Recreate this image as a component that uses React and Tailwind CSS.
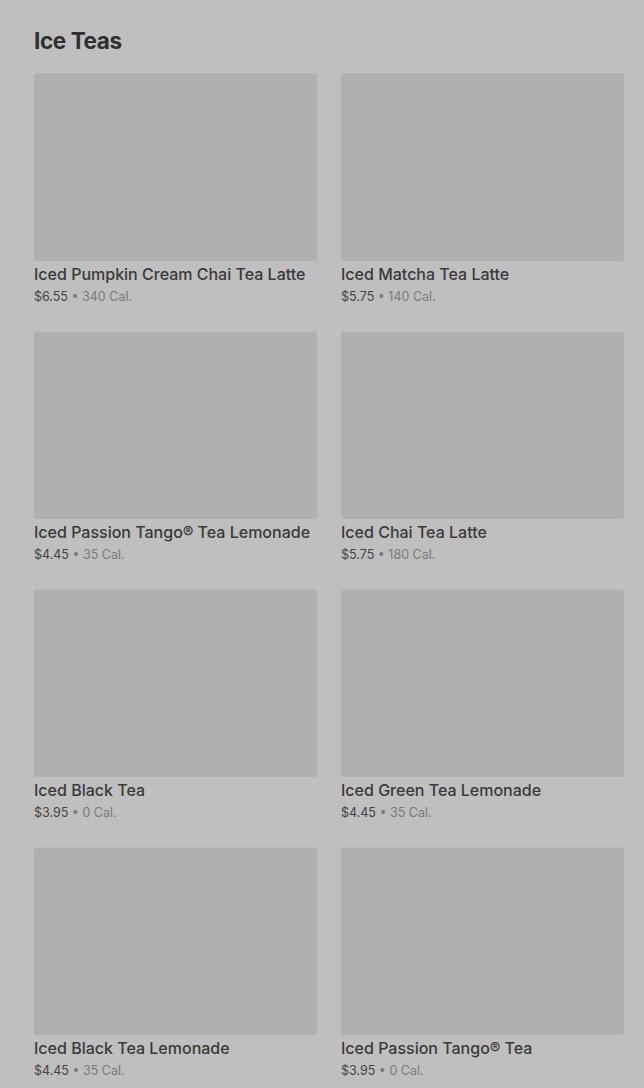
import React from "react";

const items = [
  { name: "Iced Pumpkin Cream Chai Tea Latte", price: "$6.55", cal: "340 Cal." },
  { name: "Iced Matcha Tea Latte", price: "$5.75", cal: "140 Cal." },
  { name: "Iced Passion Tango® Tea Lemonade", price: "$4.45", cal: "35 Cal." },
  { name: "Iced Chai Tea Latte", price: "$5.75", cal: "180 Cal." },
  { name: "Iced Black Tea", price: "$3.95", cal: "0 Cal." },
  { name: "Iced Green Tea Lemonade", price: "$4.45", cal: "35 Cal." },
  { name: "Iced Black Tea Lemonade", price: "$4.45", cal: "35 Cal." },
  { name: "Iced Passion Tango® Tea", price: "$3.95", cal: "0 Cal." },
];

export default function App() {
  return (
    <div
      className="min-h-[1088px] w-full bg-[#bfbfbf] pl-[34px] pr-[20px] pt-[26px]"
      style={{ fontFamily: "Inter, 'Noto Sans', sans-serif" }}
    >
      <h2 className="text-[22.5px] leading-[30px] font-bold text-[#2f2f2f] tracking-[-0.4px]">Ice Teas</h2>
      <div className="mt-[17px] grid grid-cols-2 gap-x-[24px] gap-y-[26px]">
        {items.map((it) => (
          <div key={it.name} className="flex flex-col">
            <div className="h-[188px] w-full rounded-[2px] bg-[#b0b0b0] border-t border-[#b8b8b8]" />
            <div className="mt-[3px] text-[16px] leading-[20px] font-medium text-[#3a3a3a] whitespace-nowrap">
              {it.name}
            </div>
            <div className="mt-[4px] text-[12.5px] leading-[17px] whitespace-nowrap">
              <span className="text-[#444]">{it.price}</span>
              <span className="text-[#7a7a7a]"> • {it.cal}</span>
            </div>
          </div>
        ))}
      </div>
    </div>
  );
}
